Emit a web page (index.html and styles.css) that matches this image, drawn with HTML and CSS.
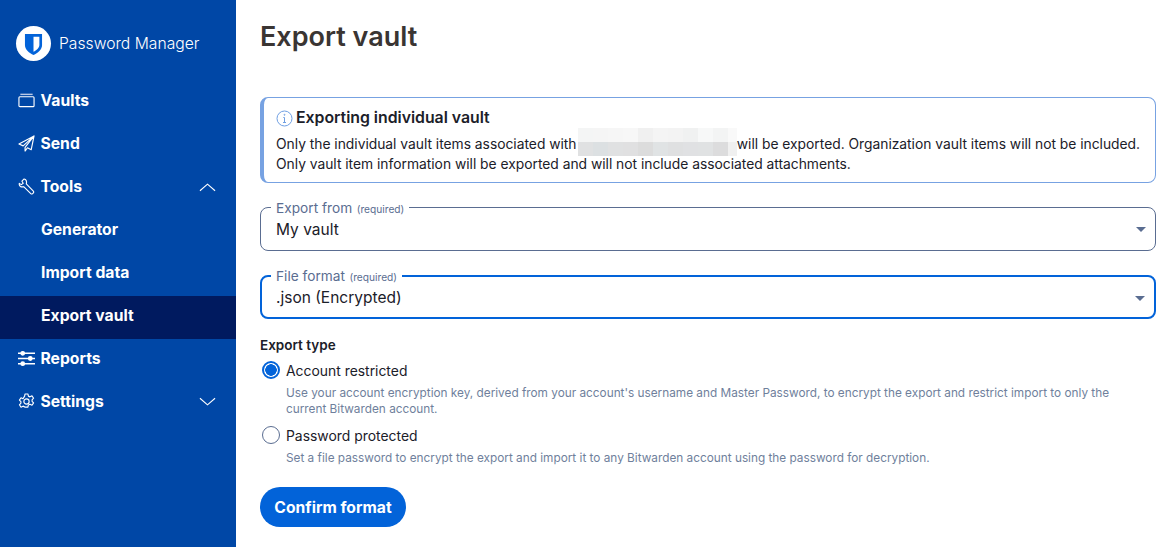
FILE: index.html
```html
<!DOCTYPE html>
<html lang="en">
<head>
    <meta charset="UTF-8">
    <title>Export vault</title>
    <link rel="stylesheet" href="styles.css">
</head>
<body>
    <div class="sidebar">
        <div class="brand">
            <div class="brand-logo">
                <svg class="shield" width="19" height="23" viewBox="0 0 20 24"><path d="M1 1h18v11.500c0 5-4.500 8.500-9 10.500-4.500-2-9-5.500-9-10.500z" fill="#0263d9"/><path d="M10 3.800h6.200v8.700c0 3.100-3.200 5.500-6.200 7.200z" fill="#fff"/></svg>
            </div>
            <span class="brand-name">Password Manager</span>
        </div>
        <ul class="nav">
            <li class="nav-item">
                <svg class="nav-icon" viewBox="0 0 18 18" fill="none" stroke="#fff" stroke-width="1.200"><rect x="1" y="5" width="16" height="10.500" rx="1"/><path d="M2.500 2.500h13" stroke="#b9c8e6" stroke-width="1.500"/></svg>
                Vaults
            </li>
            <li class="nav-item">
                <svg class="nav-icon" viewBox="0 0 18 18" fill="none" stroke="#fff" stroke-width="1.200" stroke-linejoin="round"><path d="M17 1 1 9.500l4.500 2L17 1 7.500 13v4l2.500-3.500 4 2z"/></svg>
                Send
            </li>
            <li class="nav-item">
                <svg class="nav-icon" viewBox="0 0 18 18" fill="none" stroke="#fff" stroke-width="1.200" stroke-linejoin="round"><path d="M6.500 1 4.200 3.400l1.300 2.100-2 1.500-2.100-1.300C.8 8 3 10.200 6 9.200l7.800 7.600c1 .6 3.400-1.300 2.700-2.600L8.800 6.300C9.500 3.500 8.500 1.300 6.500 1z"/></svg>
                Tools
                <svg class="nav-caret" viewBox="0 0 18 10" fill="none" stroke="#fff" stroke-width="1.200"><path d="M1 9l8-7 8 7"/></svg>
            </li>
            <li class="nav-item">Generator</li>
            <li class="nav-item">Import data</li>
            <li class="nav-item active">Export vault</li>
            <li class="nav-item">
                <svg class="nav-icon" viewBox="0 0 18 18" fill="none" stroke="#fff" stroke-width="1.500"><path d="M0 3.500h18M0 9h18M0 14.500h18"/><circle cx="5" cy="3.500" r="1.800" fill="#fff"/><circle cx="13" cy="9" r="1.800" fill="#fff"/><circle cx="5" cy="14.500" r="1.800" fill="#fff"/></svg>
                Reports
            </li>
            <li class="nav-item">
                <svg class="nav-icon" viewBox="0 0 18 18" fill="none" stroke="#fff" stroke-width="1.200" stroke-linejoin="round"><circle cx="9" cy="9" r="2.800"/><path d="M7.500 1h3l.5 2.300 1.700.8 2.100-1.100 1.700 2.500-1.600 1.700v1.600l1.600 1.700-1.700 2.500-2.100-1.100-1.700.8-.5 2.300h-3L7 14.700l-1.700-.8-2.100 1.100-1.700-2.500 1.600-1.700V9.200L1.500 7.500l1.700-2.500 2.100 1.100L7 3.300z"/></svg>
                Settings
                <svg class="nav-caret" viewBox="0 0 18 10" fill="none" stroke="#fff" stroke-width="1.200"><path d="M1 1l8 7 8-7"/></svg>
            </li>
        </ul>
    </div>

    <div class="main">
        <h1 class="page-title">Export vault</h1>

        <div class="callout">
            <div class="callout-title">
                <svg width="17" height="17" viewBox="0 0 17 17" fill="none" stroke="#6f9fe3" stroke-width="1"><circle cx="8.500" cy="8.500" r="7.500"/><path d="M8.500 7.500v5M7 12.500h3M7.300 7.500h1.200"/><circle cx="8.500" cy="4.800" r=".5"/></svg>
                Exporting individual vault
            </div>
            <p>Only the individual vault items associated with <span class="redacted"></span> will be exported. Organization vault items will not be included.</p>
            <p>Only vault item information will be exported and will not include associated attachments.</p>
        </div>

        <div class="field">
            <div class="field-label"><span class="label-text">Export from</span> <span class="label-req">(required)</span></div>
            <div class="field-value">My vault</div>
            <span class="select-arrow"></span>
        </div>

        <div class="field focused">
            <div class="field-label"><span class="label-text">File format</span> <span class="label-req">(required)</span></div>
            <div class="field-value">.json (Encrypted)</div>
            <span class="select-arrow"></span>
        </div>

        <div class="export-type">
            <div class="group-label">Export type</div>
            <div class="radio-row">
                <span class="radio checked"></span>
                <div>
                    <div class="radio-label">Account restricted</div>
                    <div class="radio-hint">Use your account encryption key, derived from your account's username and Master Password, to encrypt the export and restrict import to only the current Bitwarden account.</div>
                </div>
            </div>
            <div class="radio-row">
                <span class="radio"></span>
                <div>
                    <div class="radio-label">Password protected</div>
                    <div class="radio-hint">Set a file password to encrypt the export and import it to any Bitwarden account using the password for decryption.</div>
                </div>
            </div>
        </div>

        <button class="btn-primary" type="button">Confirm format</button>
    </div>
</body>
</html>
```

FILE: styles.css
```css
* {
    box-sizing: border-box;
}

body {
    margin: 0;
    height: 547px;
    overflow: hidden;
    display: flex;
    background-color: #fff;
    color: #1b2029;
    font-family: "Inter", "Liberation Sans", sans-serif;
}

.sidebar {
    width: 236px;
    flex-shrink: 0;
    background-color: #0047a6;
    color: #fff;
    padding-top: 25px;
}

.brand {
    display: flex;
    align-items: center;
    padding-left: 16px;
    height: 36px;
}

.brand-logo {
    width: 35px;
    height: 35px;
    border-radius: 50%;
    background-color: #fff;
    display: flex;
    align-items: center;
    justify-content: center;
}

.shield {
    margin-top: 2px;
}

.brand-name {
    margin-left: 8px;
    font-size: 15.700px;
    font-weight: 300;
}

.nav {
    list-style-type: none;
    margin: 20px 0 0;
    padding: 0;
}

.nav-item {
    height: 43px;
    display: flex;
    align-items: center;
    padding-left: 41px;
    padding-bottom: 4px;
    font-size: 15.700px;
    font-weight: 700;
}

.nav-item.active {
    background-color: #001a5f;
}

.nav-icon {
    width: 17px;
    height: 17px;
    margin-left: -23px;
    margin-right: 5.500px;
}

.nav-caret {
    width: 17px;
    height: 10px;
    margin-left: auto;
    margin-right: 20px;
}

.main {
    flex: 1;
    padding: 0 14px 0 24px;
}

.page-title {
    margin: 19px 0 0;
    font-size: 27px;
    line-height: 36px;
    font-weight: 600;
    color: #3a3533;
}

.callout {
    margin-top: 42px;
    height: 86px;
    border: 1px solid #77a2e2;
    border-left: 4px solid #77a2e2;
    border-radius: 8px;
    padding: 9px 4px 0 12px;
    font-size: 13.850px;
    letter-spacing: -0.020px;
    line-height: 20px;
}

.callout p {
    margin: 0;
}

.callout-title {
    display: flex;
    align-items: center;
    gap: 3px;
    font-size: 15.850px;
    font-weight: 600;
    line-height: 22px;
    margin-bottom: 5px;
}

/* pixelated block hiding the account email, margins keep it out of the line height */
.redacted {
    display: inline-block;
    width: 159px;
    height: 28px;
    margin: -14px -4.500px -14px -2px;
    vertical-align: 7px;
    background-repeat: no-repeat;
    background-size: 100% 14px;
    background-position: 0 0, 0 14px;
    background-image:
        linear-gradient(90deg, #f4f5f5 15px, #f5f5f5 15px 30px, #f6f6f6 30px 45px, #f7f7f7 45px 60px, #f0f0f0 60px 75px, #f4f4f4 75px 90px, #f3f3f3 90px 105px, #f0f1f1 105px 120px, #f7f8f8 120px 135px, #f3f4f4 135px 150px, #f9f9f9 150px),
        linear-gradient(90deg, #e0e1e2 15px, #dce0e2 15px 30px, #e0e1e2 30px 45px, #e0e0e1 45px 60px, #dcdcdc 60px 75px, #e0e3e4 75px 90px, #dfe0e1 90px 105px, #e0e1e3 105px 120px, #e0e2e3 120px 135px, #dcdcdd 135px 150px, #f0f0f0 150px);
}

.field {
    position: relative;
    margin-top: 24px;
    height: 44px;
    border: 1px solid #5a6d91;
    border-radius: 8px;
    padding: 0 15px;
}

.field.focused {
    border: 2px solid #0263d9;
    padding: 0 14px;
}

.field-label {
    position: absolute;
    top: -9px;
    left: 10px;
    padding: 0 5px;
    background-color: #fff;
    line-height: 16px;
    color: #5a6d91;
}

.field.focused .field-label {
    top: -10px;
    left: 9px;
}

.label-text {
    font-size: 13.700px;
}

.label-req {
    font-size: 10.200px;
}

.field-value {
    font-size: 15.500px;
    line-height: 43px;
}

.field.focused .field-value {
    line-height: 41px;
}

.select-arrow {
    position: absolute;
    right: 9px;
    top: 19px;
    border-left: 5px solid transparent;
    border-right: 5px solid transparent;
    border-top: 5px solid #5a6d91;
}

.export-type {
    margin-top: 17px;
}

.group-label {
    font-size: 13.500px;
    font-weight: 600;
    line-height: 18px;
    margin-bottom: 7px;
}

.radio-row {
    display: flex;
    gap: 6px;
    margin-bottom: 8.500px;
}

.radio {
    width: 18px;
    height: 18px;
    flex-shrink: 0;
    margin-left: 2px;
    border: 1px solid #5a6d91;
    border-radius: 50%;
}

.radio.checked {
    border: 2px solid #0263d9;
    background: radial-gradient(circle, #0263d9 5.500px, #fff 6px);
}

.radio-label {
    font-size: 13.900px;
    line-height: 20px;
}

.radio-hint {
    margin-top: 4px;
    max-width: 840px;
    font-size: 11.800px;
    line-height: 16px;
    color: #6f7f9c;
}

.btn-primary {
    margin-top: 21.500px;
    display: block;
    width: 146px;
    height: 40px;
    padding: 0;
    border: none;
    border-radius: 20px;
    background-color: #0263d9;
    color: #fff;
    font-family: inherit;
    font-size: 15.700px;
    font-weight: 700;
}
```
